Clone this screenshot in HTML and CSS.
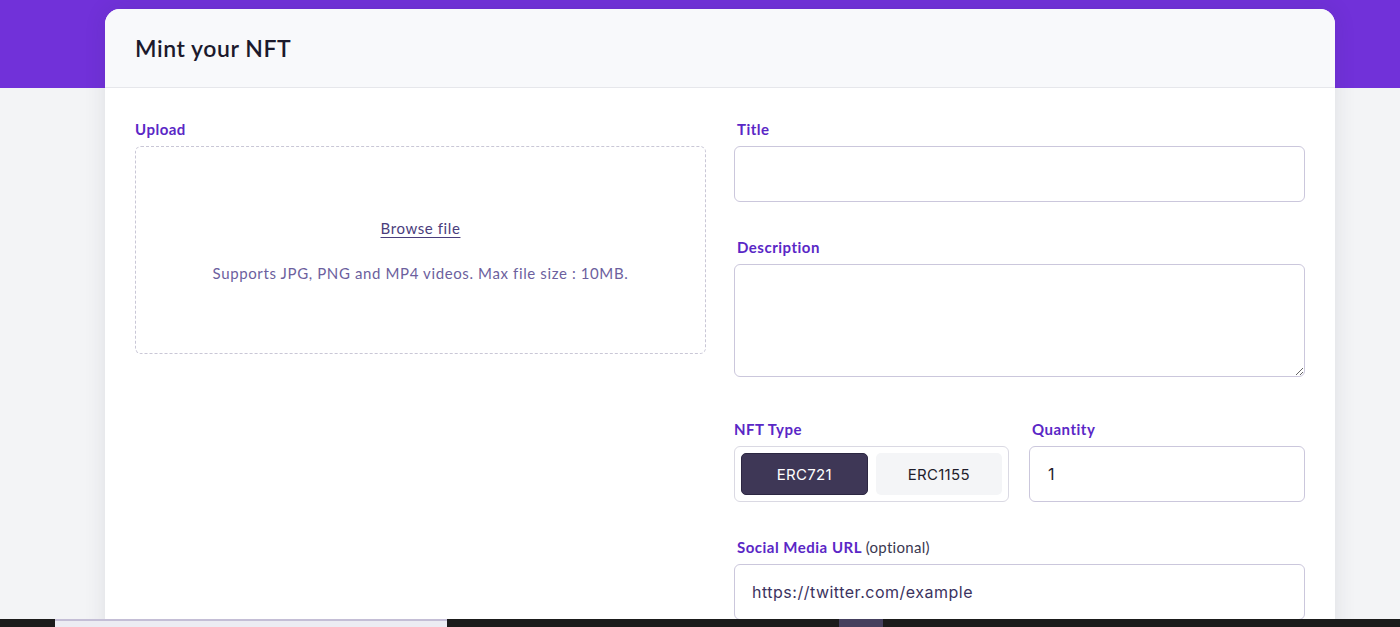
FILE: index.html
```html
<!DOCTYPE html>
<html lang="en">
<head>
<meta charset="utf-8">
<title>Mint your NFT</title>
<link rel="stylesheet" href="styles.css">
</head>
<body>
<div class="page">
  <div class="card">
    <div class="card-header">
      <h1 class="card-title">Mint your NFT</h1>
    </div>
    <div class="card-body">
      <div class="col">
        <label class="label label-flush">Upload</label>
        <div class="dropzone">
          <a class="browse" href="#">Browse file</a>
          <p class="supports">Supports JPG, PNG and MP4 videos. Max file size : 10MB.</p>
        </div>
      </div>
      <div class="col">
        <div class="field field-title">
          <label class="label">Title</label>
          <input class="input" type="text">
        </div>
        <div class="field field-desc">
          <label class="label">Description</label>
          <textarea class="input textarea"></textarea>
        </div>
        <div class="field field-row">
          <div class="subfield">
            <label class="label label-flush">NFT Type</label>
            <div class="segmented">
              <button class="seg seg-active">ERC721</button>
              <button class="seg">ERC1155</button>
            </div>
          </div>
          <div class="subfield">
            <label class="label">Quantity</label>
            <input class="input input-qty" type="text" value="1">
          </div>
        </div>
        <div class="field">
          <label class="label">Social Media URL <span class="optional">(optional)</span></label>
          <input class="input input-url" type="text" value="https://twitter.com/example">
        </div>
      </div>
    </div>
  </div>
</div>
<div class="taskbar">
  <div class="task task-light"></div>
  <div class="task task-dark"></div>
</div>
</body>
</html>
```

FILE: styles.css
```css
* { box-sizing: border-box; }

html, body { margin: 0; }

body {
  background: linear-gradient(to bottom, #7131d9 0, #7131d9 88px, #f3f4f6 88px);
  font-family: "Lato", "Noto Sans", sans-serif;
  color: #1d1b2e;
  min-height: 627px;
}

.page {
  padding: 9px 65px 0 105px;
}

.card {
  background: #ffffff;
  border-radius: 15px 15px 0 0;
  box-shadow: 0 0 22px rgba(40, 40, 60, 0.1);
  min-height: 700px;
}

.card-header {
  height: 79px;
  padding: 0 30px;
  display: flex;
  align-items: center;
  background: #f8f9fb;
  border-bottom: 1px solid #e6e7eb;
  border-radius: 15px 15px 0 0;
}

.card-title {
  margin: 0;
  font-size: 23px;
  font-weight: 600;
  color: #1c1a2c;
  letter-spacing: 0.55px;
}

.card-body {
  padding: 31px 30px 30px;
  display: grid;
  grid-template-columns: 571px 571px;
  column-gap: 28px;
  align-items: start;
}

.label {
  display: block;
  font-size: 15px;
  line-height: 20px;
  font-weight: 700;
  color: #5a27c6;
  margin-bottom: 7px;
  padding-left: 3px;
  letter-spacing: 0.5px;
}

.label-flush { padding-left: 0; }

.optional {
  font-weight: 400;
  color: #3a3850;
  letter-spacing: 0.3px;
}

.dropzone {
  height: 208px;
  margin-top: 1px;
  border: 1px dashed #c9c7d6;
  border-radius: 6px;
  display: flex;
  flex-direction: column;
  align-items: center;
  justify-content: center;
  gap: 25px;
}

.browse {
  font-size: 15px;
  line-height: 20px;
  color: #4a3d7c;
  text-decoration: underline;
  text-underline-offset: 3px;
  letter-spacing: 0.6px;
}

.supports {
  margin: 0;
  font-size: 15px;
  line-height: 20px;
  color: #6c5f9e;
  letter-spacing: 0.62px;
}

.field { margin-bottom: 35px; }
.field-desc { margin-bottom: 42px; }

.input {
  display: block;
  width: 100%;
  height: 56px;
  border: 1px solid #cbc7dc;
  border-radius: 6px;
  background: #ffffff;
  font-family: "Inter", "Noto Sans", sans-serif;
  font-size: 16px;
  color: #3b3360;
  padding: 0 17px;
  outline: none;
  letter-spacing: 0.5px;
}

.textarea {
  height: 113px;
  resize: vertical;
  padding: 12px 17px;
}

.field-row {
  display: grid;
  grid-template-columns: 275px 276px;
  column-gap: 20px;
  margin-bottom: 35px;
}

.segmented {
  height: 56px;
  margin-top: 1px;
  border: 1px solid #dad9e3;
  border-radius: 6px;
  padding: 6px;
  display: flex;
  gap: 8px;
}

.seg {
  flex: 1;
  border: 1px solid transparent;
  border-radius: 5px;
  background: #f4f5f7;
  font-family: "Inter", "Noto Sans", sans-serif;
  font-size: 15px;
  color: #1f1d2b;
  letter-spacing: 0.3px;
  cursor: pointer;
}

.seg-active {
  background: #3e3756;
  border-color: #2c2742;
  color: #ffffff;
}

.input-qty { color: #1f1d2b; padding-left: 18px; }

.taskbar {
  position: fixed;
  left: 0;
  right: 0;
  bottom: 0;
  height: 8px;
  background: #1b1b1b;
  display: flex;
  align-items: stretch;
}

.task-light {
  margin-left: 55px;
  width: 392px;
  background: #ececf3;
  border-top: 2px solid #c4bed6;
}

.task-dark {
  margin-left: 392px;
  width: 44px;
  background: #45405e;
}
```
